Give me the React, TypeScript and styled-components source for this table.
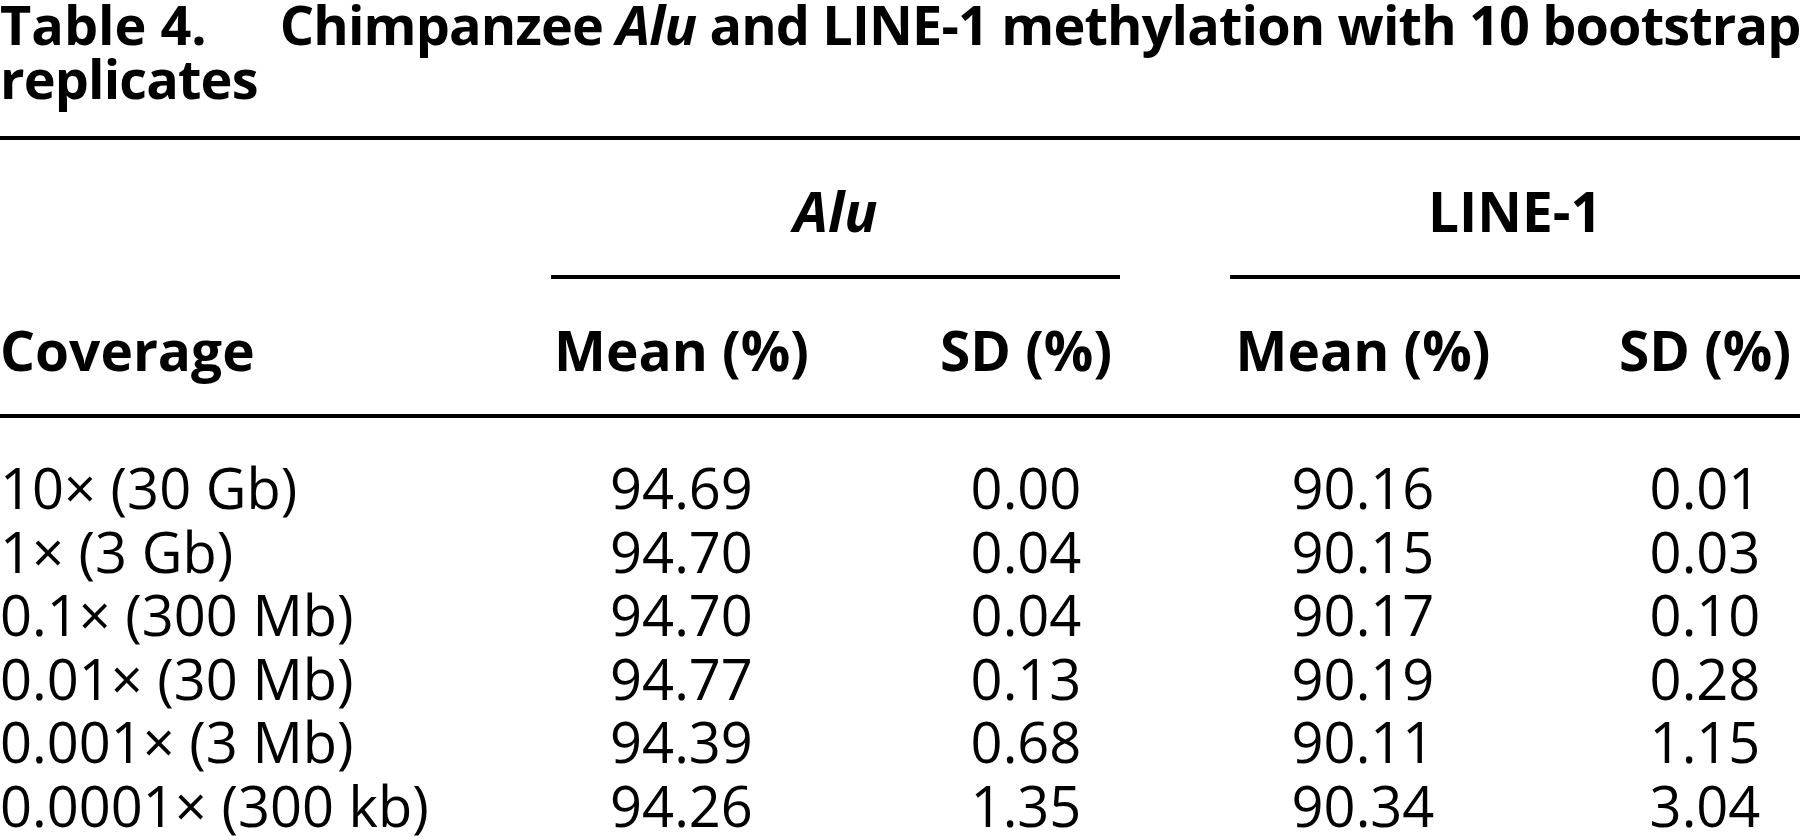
import React from 'react';
import styled, {createGlobalStyle} from 'styled-components';

const GlobalStyle = createGlobalStyle`
  html, body {
    margin: 0;
    padding: 0;
    background: #fff;
    overflow: hidden;
  }
`;

// coverage | Alu mean | gap | Alu SD | gap | L1 mean | gap | L1 SD
const COLUMNS = '551px 261px 120px 188px 110px 266px 114px 190px';
const DATA_COLS = [1, 2, 4, 6, 8];

export const Page = styled.div`
  width: 1800px;
  height: 840px;
  overflow: hidden;
  color: #000;
  font-family: "Open Sans", "Liberation Sans", sans-serif;
`;

export const Caption = styled.div`
  margin-top: -3px;
  font-size: 54px;
  line-height: 54px;
  font-weight: 700;
  white-space: nowrap;
  letter-spacing: -0.85px;
`;

export const CaptionLabel = styled.span`
  margin-right: 73px;
  letter-spacing: 0;
`;

export const Italic = styled.em`
  font-style: italic;
`;

export const GroupRow = styled.div`
  display: grid;
  grid-template-columns: ${COLUMNS};
  margin-top: 31px;
  border-top: 4px solid #000;
`;

export const GroupHead = styled.div<{$from: number; $to: number}>`
  grid-column: ${p => p.$from} / ${p => p.$to};
  padding: 43px 0 37px;
  border-bottom: 4px solid #000;
  text-align: center;
  font-size: 55px;
  line-height: 55px;
  font-weight: 700;
`;

export const HeadRow = styled.div`
  display: grid;
  grid-template-columns: ${COLUMNS};
  border-bottom: 4px solid #000;
`;

export const HeadCell = styled.div<{$col: number; $left?: boolean}>`
  grid-column: ${p => p.$col};
  padding: 43px 0 37px;
  text-align: ${p => (p.$left ? 'left' : 'center')};
  font-size: 55px;
  line-height: 55px;
  font-weight: 700;
  white-space: nowrap;
`;

export const Body = styled.div`
  display: grid;
  grid-template-columns: ${COLUMNS};
  padding-top: 38px;
`;

export const Cell = styled.div<{$col: number; $left?: boolean}>`
  grid-column: ${p => p.$col};
  text-align: ${p => (p.$left ? 'left' : 'center')};
  font-size: 56px;
  line-height: 63.6px;
  font-weight: 400;
  white-space: nowrap;
`;

const rows = [
    ['10× (30 Gb)', '94.69', '0.00', '90.16', '0.01'],
    ['1× (3 Gb)', '94.70', '0.04', '90.15', '0.03'],
    ['0.1× (300 Mb)', '94.70', '0.04', '90.17', '0.10'],
    ['0.01× (30 Mb)', '94.77', '0.13', '90.19', '0.28'],
    ['0.001× (3 Mb)', '94.39', '0.68', '90.11', '1.15'],
    ['0.0001× (300 kb)', '94.26', '1.35', '90.34', '3.04'],
];

const App = () => {
    return (
        <Page>
            <GlobalStyle/>
            <Caption>
                <CaptionLabel>Table 4.</CaptionLabel>
                Chimpanzee <Italic>Alu</Italic> and LINE-1 methylation with 10 bootstrap
                <br/>
                replicates
            </Caption>
            <GroupRow>
                <GroupHead $from={2} $to={5}><Italic>Alu</Italic></GroupHead>
                <GroupHead $from={6} $to={9}>LINE-1</GroupHead>
            </GroupRow>
            <HeadRow>
                <HeadCell $col={1} $left>Coverage</HeadCell>
                <HeadCell $col={2}>Mean (%)</HeadCell>
                <HeadCell $col={4}>SD (%)</HeadCell>
                <HeadCell $col={6}>Mean (%)</HeadCell>
                <HeadCell $col={8}>SD (%)</HeadCell>
            </HeadRow>
            <Body>
                {rows.map((row) =>
                    row.map((value, i) => (
                        <Cell key={row[0] + i} $col={DATA_COLS[i]} $left={i === 0}>
                            {value}
                        </Cell>
                    ))
                )}
            </Body>
        </Page>
    );
};

export default App;
